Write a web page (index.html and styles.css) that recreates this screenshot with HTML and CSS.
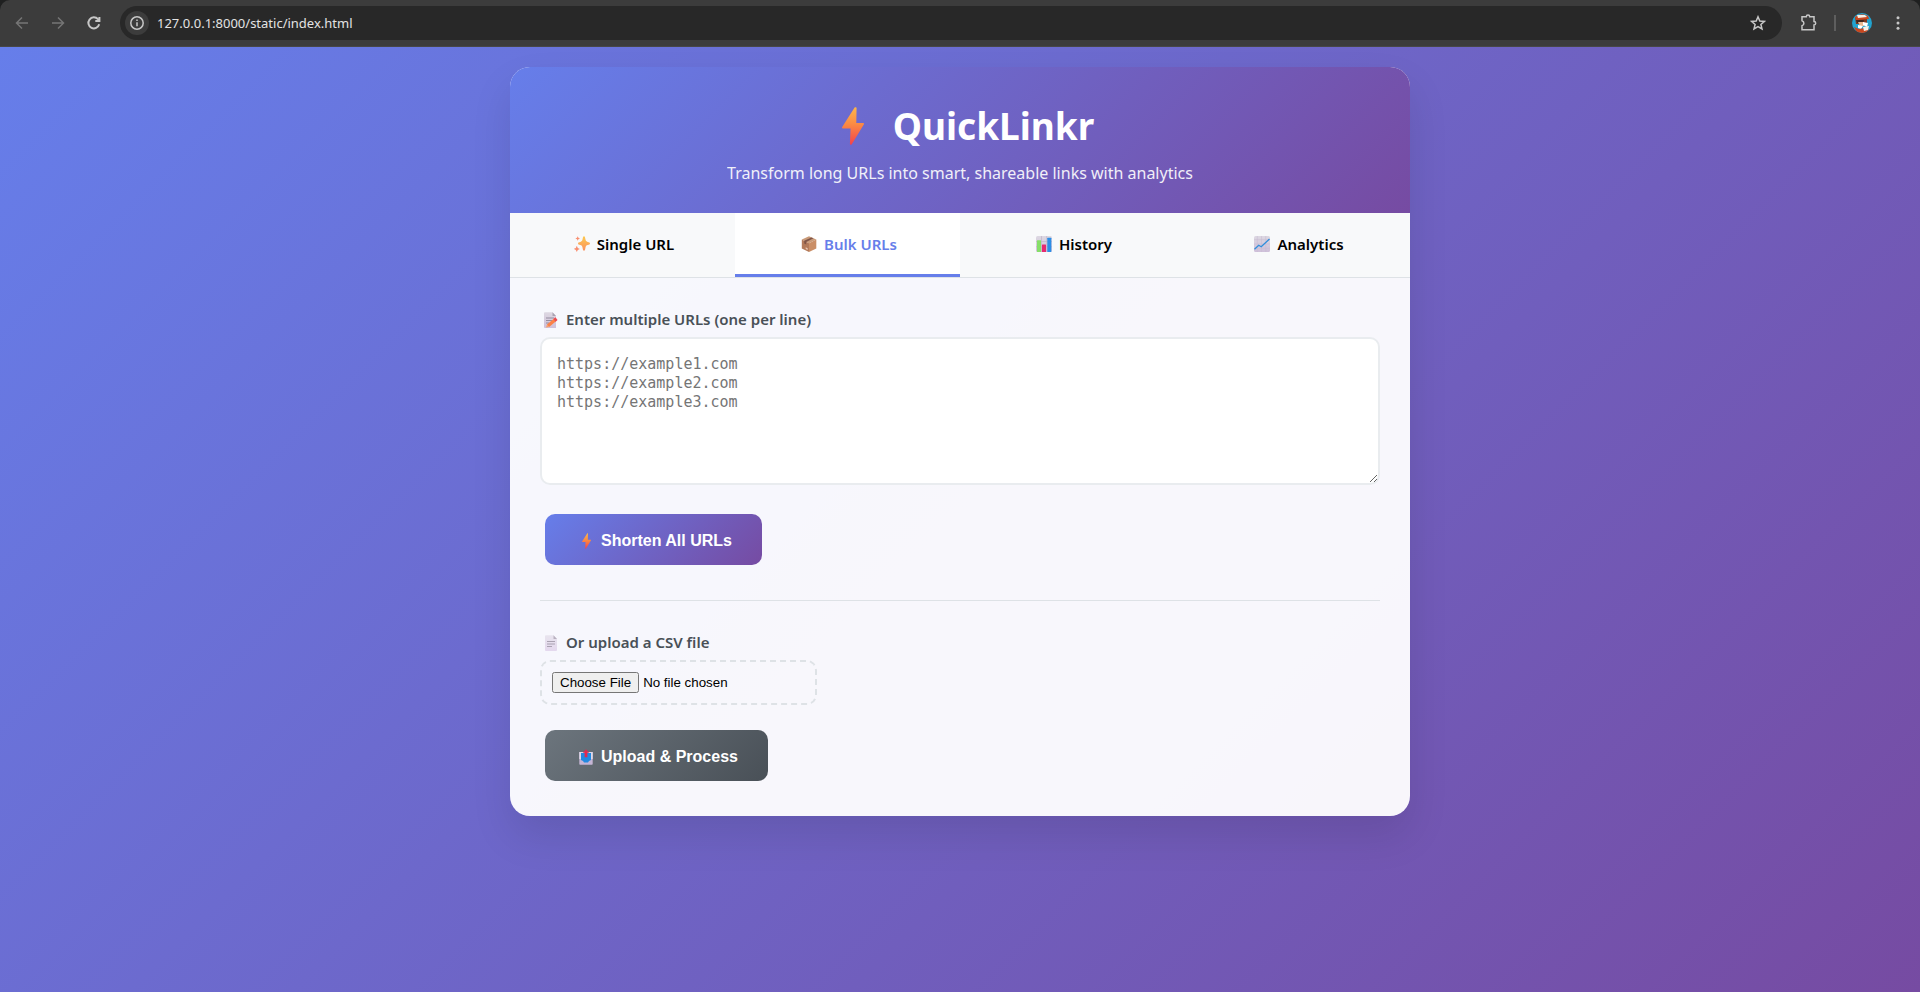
FILE: index.html
```html
<!DOCTYPE html>
<html lang="en">
<head>
<meta charset="utf-8">
<meta name="viewport" content="width=device-width, initial-scale=1">
<title>QuickLinkr</title>
<link rel="stylesheet" href="styles.css">
</head>
<body>
<svg class="defs" aria-hidden="true">
  <defs>
    <linearGradient id="boltFill" x1="0" y1="0" x2="0" y2="1"><stop offset="0" stop-color="#fcb649"/><stop offset=".45" stop-color="#fb8a44"/><stop offset="1" stop-color="#f2414c"/></linearGradient>
    <linearGradient id="sparkFill" x1="0" y1="0" x2="0" y2="1"><stop offset="0" stop-color="#fcc94f"/><stop offset="1" stop-color="#fb9260"/></linearGradient>
    <linearGradient id="paperFill" x1="0" y1="0" x2="0" y2="1"><stop offset="0" stop-color="#ddd8e2"/><stop offset="1" stop-color="#cfc0da"/></linearGradient>
    <linearGradient id="pageFill" x1="0" y1="0" x2="0" y2="1"><stop offset="0" stop-color="#e8e4ee"/><stop offset="1" stop-color="#e4d8ee"/></linearGradient>
    <symbol id="bolt" viewBox="0 0 22 38"><path d="M12.6.6C13 0 14.600 0 14.600 1L14.300 16H21c1 0 1.300.7.8 1.500L9.800 37.300c-.5.9-2 .7-1.900-.3L8.600 21.600H1c-.9 0-1.200-.8-.8-1.500z" fill="url(#boltFill)"/></symbol>
  </defs>
</svg>

<div class="browser">
  <nav class="toolbar" aria-label="Browser">
    <div class="nav-buttons">
      <button class="tool dim" type="button" aria-label="Back"><svg width="16" height="16" viewBox="0 0 16 16"><path d="M14 8H3M8 2.500 2.500 8 8 13.500"/></svg></button>
      <button class="tool dim" type="button" aria-label="Forward"><svg width="16" height="16" viewBox="0 0 16 16"><path d="M2 8h11M8 2.500 13.500 8 8 13.500"/></svg></button>
      <button class="tool" type="button" aria-label="Reload"><svg width="16" height="16" viewBox="0 0 16 16"><path class="bold" d="M13.200 9.300A5.500 5.500 0 1 1 12 4.200L13 5.300"/><path class="bold" d="M13.400 2v4.100H9.300"/></svg></button>
    </div>
    <div class="omnibox">
      <button class="site-info" type="button" aria-label="Site information"><svg width="16" height="16" viewBox="0 0 16 16"><circle cx="8" cy="8" r="6.200"/><path d="M8 7.200v4M8 4.500v1.400"/></svg></button>
      <input class="address" type="text" aria-label="Address" value="127.0.0.1:8000/static/index.html">
      <button class="tool star" type="button" aria-label="Bookmark"><svg width="16" height="16" viewBox="0 0 16 16"><path d="M8 1.800 9.800 6l4.600.4-3.500 3 1.100 4.500L8 11.500l-4 2.400 1.100-4.500-3.500-3L6.200 6z"/></svg></button>
    </div>
    <div class="tools-right">
      <button class="tool" type="button" aria-label="Extensions"><svg width="18" height="18" viewBox="0 0 18 18"><path d="M3 2.800h4.300a1.700 1.700 0 0 1 3.400 0H15v4.700a1.700 1.700 0 0 1 0 3.400v4.900H3v-4a2.600 2.600 0 0 0 0-5z"/></svg></button>
      <span class="divider"></span>
      <button class="tool" type="button" aria-label="Profile"><svg class="avatar" width="20" height="20" viewBox="0 0 20 20"><path fill="#22a3cf" d="M0 0h20v20H0z"/><path fill="#7b3b22" d="M3 4h12v7H4z"/><path fill="#c9471f" d="M3 4Q9-1 16 3l1 3L4 7z"/><path fill="#f5efe6" d="M5 2h8l2 2-9 1z"/><path fill="#3d261f" d="M4 7h8l-1 3H5z"/><path fill="#e9b88f" d="M6 9h6v4H8z"/><path fill="#fff" d="m11 9 5 1-1 4-4-2zM6 12l5 1-2 3-3-1z"/><path fill="#c9471f" d="m2 14 5 2 6-1 4 1-3 4H5z"/><path fill="#f5efe6" d="m11 14 6-1-1 4-4 1z"/></svg></button>
      <button class="tool" type="button" aria-label="Menu"><svg width="16" height="16" viewBox="0 0 16 16"><g class="dots"><circle cx="8" cy="2.700" r="1.500"/><circle cx="8" cy="8" r="1.500"/><circle cx="8" cy="13.300" r="1.500"/></g></svg></button>
    </div>
  </nav>
</div>

<main class="page">
  <div class="card">
    <header class="card-header">
      <h1><span class="title-icon"><svg width="22" height="38"><use href="#bolt"/></svg></span>QuickLinkr</h1>
      <p>Transform long URLs into smart, shareable links with analytics</p>
    </header>

    <div class="tabs" role="tablist">
      <button class="tab" type="button" role="tab" aria-selected="false"><span class="icon"><svg width="16" height="16" viewBox="0 0 16 16"><g fill="url(#sparkFill)"><path d="M10 .3c.9 0 1.100 1.200 1.500 3.300.3 1.400.9 2 2.200 2.300 1.600.3 2.300.8 2.300 1.600s-.7 1.300-2.300 1.600c-1.300.3-1.900.9-2.200 2.300-.4 2.100-.6 3.300-1.500 3.300s-1.100-1.200-1.500-3.300c-.3-1.400-.9-2-2.200-2.300C4.700 8.800 4 8.300 4 7.500s.7-1.300 2.300-1.600c1.300-.3 1.900-.9 2.200-2.300C8.900 1.500 9.100.3 10 .3z"/></g><path d="m3.700.2.700 1.600 1.600.7-1.600.7-.7 1.600L3 3.200l-1.600-.7L3 1.800zM2.800 9.800l1 2.100 2 1-2 1-1 2-1-2-2-1 2-1z" fill="#f98f70"/></svg></span>Single URL</button>
      <button class="tab active" type="button" role="tab" aria-selected="true"><span class="icon"><svg width="16" height="16" viewBox="0 0 16 16"><path fill="#c99a78" d="M8 .2 15.300 3.500 8 7.200.8 3.500z"/><path fill="#b37a5a" d="M.8 3.500 8 7.200V16L.8 12.500z"/><path fill="#ca8e66" d="M15.300 3.500 8 7.200V16l7.300-3.500z"/><path fill="#7f5548" d="m10.500 1.400 2 .9-7.300 3.600v2.600l-2-1V4.800z"/><path fill="#e9c6b1" d="m4.700 11.300 2 1v1.700l-2-1z"/></svg></span>Bulk URLs</button>
      <button class="tab" type="button" role="tab" aria-selected="false"><span class="icon"><svg width="16" height="16" viewBox="0 0 16 16"><rect width="16" height="16" rx="1.500" fill="url(#paperFill)"/><path d="M5.500 0v16M10.700 0v16M0 5.500h16M0 10.700h16" stroke="#c0b4c8" stroke-width=".7"/><rect x="1" y="4.300" width="4" height="11.700" rx=".5" fill="#86df68"/><rect x="6" y="8.500" width="4" height="7.500" rx=".5" fill="#e52b70"/><rect x="11.300" y="1.800" width="4" height="14.200" rx=".5" fill="#2c8ee6"/></svg></span>History</button>
      <button class="tab" type="button" role="tab" aria-selected="false"><span class="icon"><svg width="16" height="16" viewBox="0 0 16 16"><rect width="16" height="16" rx="1.500" fill="url(#paperFill)"/><path d="M3.300 0v16M7.500 0v16M11.700 0v16M0 3.700h16M0 8h16M0 12.300h16" stroke="#c6bad0" stroke-width=".5"/><path d="m.5 13.300 4.200-4 2.500 1.500L15.500 3" fill="none" stroke="#318fdc" stroke-width="1.300"/></svg></span>Analytics</button>
    </div>

    <div class="panel">
      <section class="group">
        <label class="label" for="bulk"><span class="icon"><svg width="14" height="16" viewBox="0 0 14 16"><path fill="url(#paperFill)" d="M0 1Q0 .2 1 .2h7.500L12 4v12H1q-1 0-1-1z"/><path fill="#aaa3b2" d="M8.500.2 12 4H8.500z"/><path d="M2 6h8M2 8.500h6M2 11h3" stroke="#958da0"/><path d="m4 13.700 7.500-6.200" stroke="#fb8248" stroke-width="3.400"/><path d="m10.500 8.300 2-1.600" stroke="#ee4a50" stroke-width="3.400"/><path fill="#f7a06a" d="m2 15.500 1-3 2.200 2.500z"/></svg></span>Enter multiple URLs (one per line)</label>
        <textarea id="bulk" class="urls" rows="6" placeholder="https://example1.com&#10;https://example2.com&#10;https://example3.com"></textarea>
        <button class="btn primary" type="button"><span class="icon"><svg width="9" height="16"><use href="#bolt"/></svg></span>Shorten All URLs</button>
      </section>

      <section class="group upload">
        <label class="label" for="csv"><span class="icon"><svg width="12" height="16" viewBox="0 0 12 16"><path fill="url(#pageFill)" d="M0 1Q0 .2 1 .2h7.500L12 4v11q0 1-1 1H1q-1 0-1-1z"/><path fill="#b9b1c0" d="M8.500.2 12 4H8.500z"/><path d="M2 6.500h8M2 9h8M2 11.500h5" stroke="#aaa2b2"/></svg></span>Or upload a CSV file</label>
        <input id="csv" class="file" type="file" accept=".csv">
        <button class="btn secondary" type="button"><span class="icon"><svg width="14" height="16" viewBox="0 0 14 16"><path fill="#c5b5d5" d="M.3 3h13.400v12q0 .7-.8.7H1q-.7 0-.7-.7z"/><path fill="#e0d8e8" d="M.3 3h13.400v7H.3z"/><path fill="#2389e0" d="M2 4h10v7l-2 1-1 1.500H5L4 12l-2-1z"/><path fill="#e02a50" d="m7 .2 3.200 3.500H8.400v4.500H5.600V3.700H3.800z"/></svg></span>Upload &amp; Process</button>
      </section>
    </div>
  </div>
</main>
</body>
</html>
```
FILE: styles.css
```css
* {
  box-sizing: border-box;
}

body {
  margin: 0;
  min-height: 100vh;
  display: flex;
  flex-direction: column;
  font-family: "Noto Sans", "Open Sans", sans-serif;
  color: #000;
}

button {
  font-family: inherit;
  cursor: pointer;
}

.defs {
  position: absolute;
  width: 0;
  height: 0;
}

/* Browser toolbar */
.browser {
  background: #1f2020;
}

.toolbar {
  display: flex;
  align-items: center;
  height: 47px;
  padding: 0 12px;
  background: #3c3c3c;
  border-bottom: 1px solid #474747;
  border-radius: 10px 10px 0 0;
}

.nav-buttons {
  display: flex;
  gap: 16px;
  margin-right: 16px;
}

.tool {
  display: flex;
  align-items: center;
  justify-content: center;
  width: 20px;
  height: 34px;
  padding: 0;
  border: 0;
  background: none;
  color: #c7c7c7;
}

.tool.dim {
  color: #757575;
}

.toolbar svg {
  fill: none;
  stroke: currentColor;
  stroke-width: 1.500;
}

.toolbar .bold {
  stroke-width: 2;
}

.toolbar .dots {
  fill: currentColor;
  stroke: none;
}

.omnibox {
  flex: 1;
  display: flex;
  align-items: center;
  height: 34px;
  padding: 0 14px 0 5px;
  border-radius: 17px;
  background: #282828;
}

.site-info {
  display: flex;
  align-items: center;
  justify-content: center;
  width: 24px;
  height: 24px;
  padding: 0;
  border: 0;
  border-radius: 50%;
  background: #3c3c3c;
  color: #c7c7c7;
}

.address {
  flex: 1;
  min-width: 0;
  padding: 0 8px;
  border: 0;
  background: none;
  color: #e3e3e3;
  font: 13px "Noto Sans", sans-serif;
}

.tools-right {
  display: flex;
  align-items: center;
  gap: 16px;
  padding-left: 16px;
}

.divider {
  width: 2px;
  height: 16px;
  background: #5e5e5e;
}

.toolbar .avatar {
  border-radius: 50%;
  stroke: none;
}

/* Page */
.page {
  flex: 1;
  padding: 20px;
  background: linear-gradient(135deg, #667eea 0%, #764ba2 100%);
}

.card {
  max-width: 900px;
  margin: 0 auto;
  overflow: hidden;
  border-radius: 20px;
  background: rgba(255, 255, 255, 0.95);
  box-shadow: 0 20px 40px rgba(0, 0, 0, 0.1);
}

.card-header {
  padding: 32px 30px 28px;
  background: linear-gradient(135deg, #667eea 0%, #764ba2 100%);
  color: #fff;
  text-align: center;
}

h1 {
  display: flex;
  align-items: center;
  justify-content: center;
  gap: 12px;
  margin: 0 0 9px;
  font-size: 37px;
  line-height: 53px;
}

.title-icon {
  display: flex;
  justify-content: center;
  width: 55px;
}

.card-header p {
  margin: 0;
  font-size: 16px;
  line-height: 24px;
  opacity: 0.9;
}

.icon {
  display: flex;
  align-items: center;
  justify-content: center;
  width: 22px;
  height: 16px;
}

.tabs {
  display: flex;
  background: #f8f9fa;
  border-bottom: 1px solid #dee2e6;
}

.tab {
  flex: 1;
  display: flex;
  align-items: center;
  justify-content: center;
  gap: 4px;
  height: 64px;
  padding: 0;
  border: 0;
  border-bottom: 3px solid transparent;
  background: none;
  color: #000;
  font-size: 15px;
  font-weight: 600;
}

.tab.active {
  background: #fff;
  border-bottom-color: #667eea;
  color: #667eea;
}

.panel {
  padding: 30px;
}

.group {
  display: flex;
  flex-direction: column;
  align-items: flex-start;
}

.upload {
  margin-top: 30px;
  padding-top: 30px;
  border-top: 1px solid #dee2e6;
}

.label {
  display: flex;
  align-items: center;
  gap: 4px;
  margin-bottom: 6px;
  color: #495057;
  font-size: 15px;
  font-weight: 600;
  line-height: 23px;
}

.urls {
  display: block;
  width: 100%;
  margin-bottom: 24px;
  padding: 16px 15px 14px;
  border: 2px solid #e9ecef;
  border-radius: 10px;
  background: #fff;
  font: 15px/19px "DejaVu Sans Mono", monospace;
  resize: vertical;
}

.urls::placeholder {
  color: #757575;
}

.file {
  margin-bottom: 20px;
  width: 277px;
  padding: 10px;
  border: 2px dashed #dee2e6;
  border-radius: 10px;
  font-family: "Liberation Sans", sans-serif;
}

.file::file-selector-button {
  font-family: "Liberation Sans", sans-serif;
}

.btn {
  display: flex;
  align-items: center;
  gap: 4px;
  height: 51px;
  margin: 5px;
  padding: 2px 30px 0;
  border: 0;
  border-radius: 10px;
  color: #fff;
  font: bold 16px "Liberation Sans", sans-serif;
}

.primary {
  background: linear-gradient(135deg, #667eea 0%, #764ba2 100%);
}

.secondary {
  background: linear-gradient(135deg, #6c757d 0%, #495057 100%);
}
```
